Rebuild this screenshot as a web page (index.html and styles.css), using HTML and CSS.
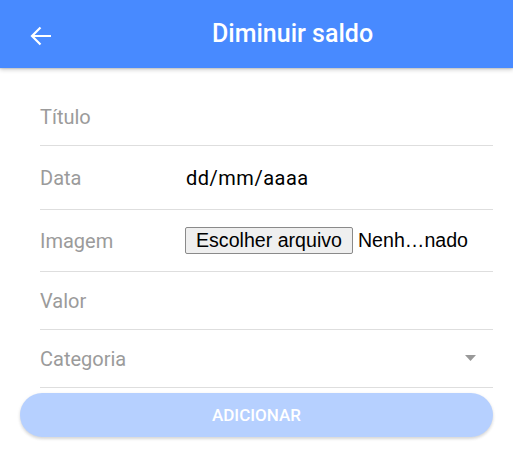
FILE: index.html
```html
<!DOCTYPE html>
<html lang="pt-BR">
<head>
<meta charset="utf-8">
<title>Diminuir saldo</title>
<link rel="stylesheet" href="styles.css">
</head>
<body>
<header class="toolbar">
  <button class="back" aria-label="Voltar">
    <svg width="22" height="20" viewBox="0 0 22 20" aria-hidden="true">
      <path d="M21 10H2.5M10.5 1.5L2 10l8.5 8.5" fill="none" stroke="#fff" stroke-width="2.2" stroke-linecap="butt" stroke-linejoin="miter"/>
    </svg>
  </button>
  <h1 class="title">Diminuir saldo</h1>
</header>
<main class="content">
  <div class="list">
    <div class="item"><div class="item-inner h57"><span class="label">Título</span></div></div>
    <div class="item"><div class="item-inner h63"><span class="label">Data</span><span class="date-value">dd/mm/aaaa</span></div></div>
    <div class="item"><div class="item-inner h61"><span class="label">Imagem</span><span class="file-btn">Escolher arquivo</span><span class="file-name">Nenh…nado</span></div></div>
    <div class="item"><div class="item-inner h57"><span class="label">Valor</span></div></div>
    <div class="item"><div class="item-inner h57"><span class="label grow">Categoria</span>
      <svg class="select-arrow" width="11" height="6" viewBox="0 0 11 6" aria-hidden="true"><path d="M0 0h11L5.5 6z" fill="#999"/></svg>
    </div></div>
  </div>
  <button class="submit" disabled>ADICIONAR</button>
</main>
</body>
</html>
```

FILE: styles.css
```css
* { box-sizing: border-box; }
html, body { margin: 0; padding: 0; background: #fff; }
body {
  font-family: Roboto, "Noto Sans", Arial, sans-serif;
  width: 513px;
  height: 474px;
  overflow: hidden;
}
.toolbar {
  height: 68px;
  background: #488aff;
  display: flex;
  align-items: center;
  padding-left: 30px;
  box-shadow: 0 2px 4px rgba(0,0,0,0.18), 0 1px 1px rgba(0,0,0,0.08);
  position: relative;
  z-index: 2;
}
.back {
  border: 0;
  background: transparent;
  padding: 0;
  margin: 0;
  width: 22px;
  height: 20px;
  display: flex;
  margin-top: 3px;
}
.title {
  margin: 0 0 0 160px;
  color: #fff;
  font-size: 25px;
  font-weight: 500;
  line-height: 30px;
}
.content {
  padding: 20px 20px 0 20px;
}
.item {
  padding-left: 20px;
}
.item-inner {
  display: flex;
  align-items: center;
  border-bottom: 1px solid #dedede;
}
.h57 { height: 58px; }
.h63 { height: 64px; }
.h61 { height: 62px; }
.label {
  width: 146px;
  flex: 0 0 146px;
  color: #9b9b9b;
  font-size: 20px;
  line-height: 24px;
}
.label.grow { flex: 1 1 auto; }
.date-value {
  font-size: 20px;
  color: #000;
  letter-spacing: 0.5px;
  line-height: 24px;
}
.file-btn {
  font-family: "Liberation Sans", Arial, sans-serif;
  font-size: 19.6px;
  height: 27px;
  line-height: 25px;
  padding: 0 10px;
  border: 1px solid #8a8a8a;
  border-radius: 2px;
  background: #efefef;
  color: #000;
  margin-left: -1px;
}
.file-name {
  font-family: "Liberation Sans", Arial, sans-serif;
  font-size: 19.6px;
  color: #000;
  margin-left: 5px;
}
.select-arrow {
  margin-right: 17px;
  margin-top: -2px;
}
.submit {
  display: block;
  width: 100%;
  height: 44px;
  margin-top: 5px;
  border: 0;
  border-radius: 22px;
  background: #b6d0ff;
  color: #fff;
  font-family: Roboto, "Noto Sans", Arial, sans-serif;
  font-size: 17px;
  font-weight: 500;
  box-shadow: 0 2px 3px rgba(0,0,0,0.12), 0 1px 4px rgba(0,0,0,0.06);
}
```
